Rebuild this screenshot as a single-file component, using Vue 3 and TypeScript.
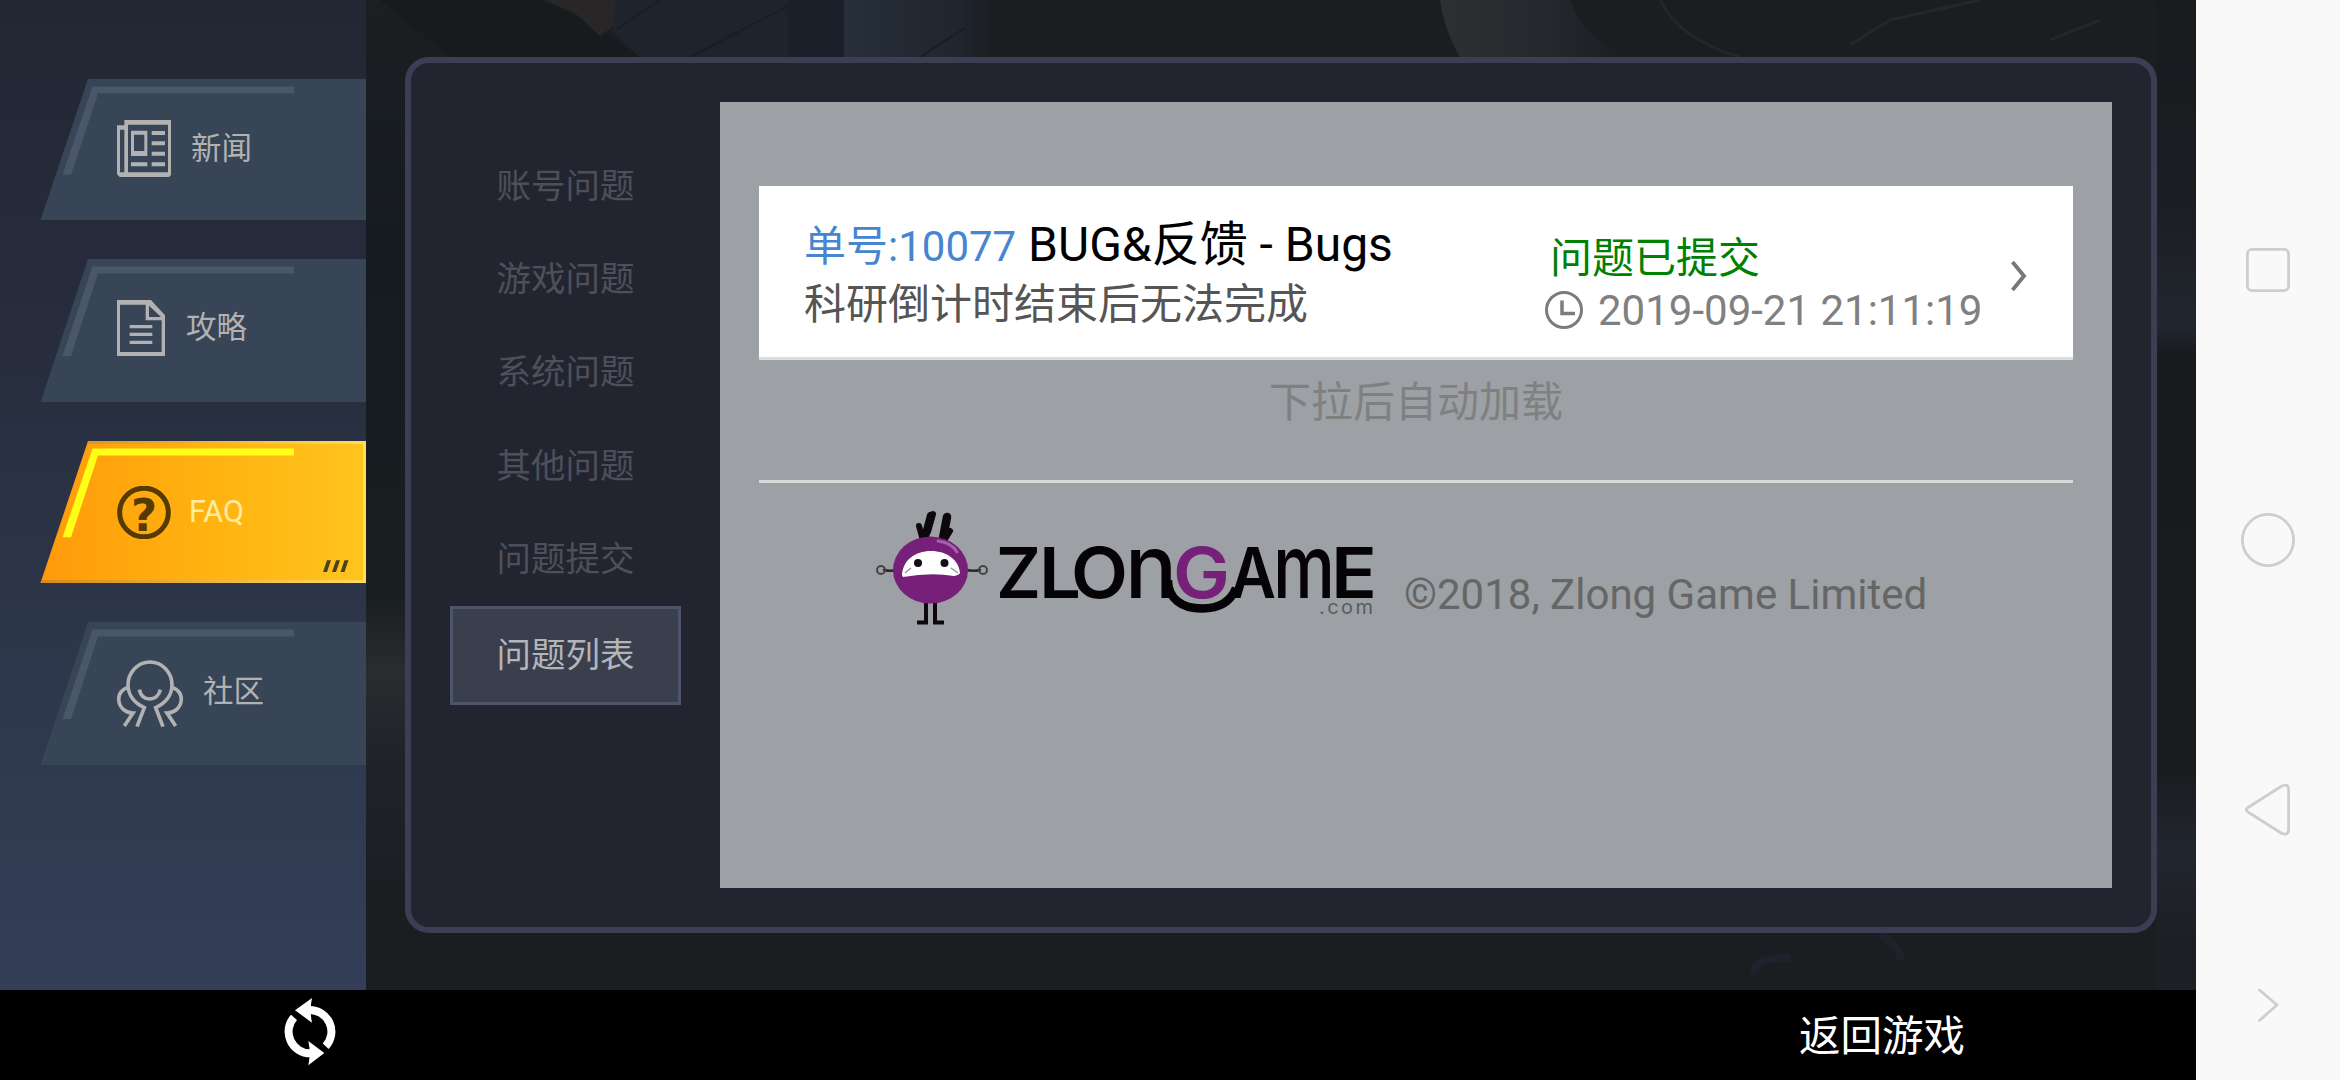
<script setup lang="ts">
interface Tab {
  id: string
  label: string
  active?: boolean
}

const tabs: Tab[] = [
  { id: 'news', label: '新闻' },
  { id: 'guide', label: '攻略' },
  { id: 'faq', label: 'FAQ', active: true },
  { id: 'community', label: '社区' },
]

const menu: string[] = ['账号问题', '游戏问题', '系统问题', '其他问题', '问题提交', '问题列表']
const current = '问题列表'
</script>

<template>
  <div class="screen">
    <div class="app">
      <div class="stage">
        <aside class="sidebar">
          <a v-for="tab in tabs" :key="tab.id" class="tab" :class="[tab.id, { active: tab.active }]">
            <svg class="plate" viewBox="0 0 326 143" preserveAspectRatio="none" width="326" height="143">
              <defs>
                <linearGradient id="gold" x1="0" x2="1" y1="0" y2="0">
                  <stop offset="0" stop-color="#ff9a0b" />
                  <stop offset="0.5" stop-color="#ffb210" />
                  <stop offset="1" stop-color="#ffc41e" />
                </linearGradient>
                <linearGradient id="rim" x1="0" x2="1" y1="0" y2="0">
                  <stop offset="0" stop-color="#d88a1a" />
                  <stop offset="1" stop-color="#ffdc58" />
                </linearGradient>
              </defs>
              <path class="shape" d="M48 0H326V143H0.5Z" />
              <path v-if="tab.active" d="M48 1.5H324.5V141.5H2" fill="none" stroke="url(#rim)" stroke-width="3" />
              <path class="accent" d="M52.5 7.500H254V14.500H58L31 97H22.500Z" />
              <path v-if="tab.active" d="M287 120h4l-4 12h-4zM296 120h4l-4 12h-4zM304.500 120h4l-4 12h-4z" fill="#4a431f" />
            </svg>
            <svg v-if="tab.id === 'news'" class="icon" viewBox="0 0 162 171" width="54" height="57">
              <path fill="#b2b2b2" d="M22 0H162V165L156 171H8L0 163V16H22ZM33 14V157H153V14ZM9 29V157H22V29Z" fill-rule="evenodd" />
              <path fill="#b2b2b2" fill-rule="evenodd" d="M42 32H91V108H42ZM51 44V93H82V44ZM104 33H144V45H104ZM104 64H144V76H104ZM104 95H144V107H104ZM104 127H144V139H104ZM42 127H91V139H42Z" />
            </svg>
            <svg v-else-if="tab.id === 'guide'" class="icon" viewBox="0 0 144 168" width="48" height="56">
              <path fill="#b2b2b2" fill-rule="evenodd" d="M0 0H102L144 46V168H0ZM9 14V156H134V61H86V14ZM96 17V51H132Z" />
              <path stroke="#b2b2b2" stroke-width="10" d="M38 80H106M38 103H106M38 127H106" />
            </svg>
            <svg v-else-if="tab.id === 'faq'" class="icon" viewBox="0 0 162 158" width="54" height="53">
              <circle cx="81" cy="79" r="73" fill="none" stroke="#553a04" stroke-width="15" />
              <text x="81" y="134" text-anchor="middle" class="mark">?</text>
            </svg>
            <svg v-else class="icon" viewBox="0 0 198 204" width="66" height="68">
              <g fill="none" stroke="#b2b2b2" stroke-width="11">
                <path d="M60 200L82 143C50 128 33 102 33 75A66 69 0 0 1 165 75C165 102 148 128 116 143L138 200" />
                <path d="M67 89C71 107 83 117 98 117S126 107 130 89" />
                <path d="M30 83C10 92 4 108 5.500 122C8 145 28 159 48 159L22 198M168 83C188 92 194 108 192.500 122C190 145 170 159 150 159L176 198" />
              </g>
            </svg>
            <span class="tab-label">{{ tab.label }}</span>
          </a>
        </aside>

        <main class="content">
          <svg class="scenery" viewBox="366 0 1830 990" width="1830" height="990" aria-hidden="true">
            <defs>
              <linearGradient id="side" x1="0" x2="0" y1="0" y2="1">
                <stop offset="0" stop-color="#1b1f21" />
                <stop offset="0.25" stop-color="#161b22" />
                <stop offset="0.6" stop-color="#191e20" />
                <stop offset="0.68" stop-color="#2a2c2e" />
                <stop offset="0.76" stop-color="#20232a" />
                <stop offset="0.9" stop-color="#1b1e21" />
              </linearGradient>
              <linearGradient id="right" x1="0" x2="0" y1="0" y2="1">
                <stop offset="0" stop-color="#181c1f" />
                <stop offset="0.2" stop-color="#1a1e22" />
                <stop offset="0.33" stop-color="#22262f" />
                <stop offset="0.36" stop-color="#171b1e" />
                <stop offset="0.78" stop-color="#191c1f" />
                <stop offset="0.86" stop-color="#22262f" />
                <stop offset="0.95" stop-color="#1c1f23" />
              </linearGradient>
              <linearGradient id="beam" x1="0" x2="1" y1="0" y2="0">
                <stop offset="0" stop-color="#2e2f32" />
                <stop offset="0.6" stop-color="#25282d" />
                <stop offset="1" stop-color="#1b1e21" />
              </linearGradient>
              <linearGradient id="steel" x1="0" x2="1" y1="0" y2="0">
                <stop offset="0" stop-color="#262f3a" />
                <stop offset="0.8" stop-color="#20252e" />
                <stop offset="1" stop-color="#1b1e21" />
              </linearGradient>
            </defs>
            <rect x="366" width="1830" height="990" fill="#1b1e21" />
            <rect x="366" width="39" height="990" fill="url(#side)" />
            <rect x="2156" width="40" height="990" fill="url(#right)" />
            <path fill="#171b1d" d="M380 0H540L585 20L640 57H450Z" />
            <path fill="#292627" d="M545 0H616V24L600 36L576 14Z" />
            <path fill="#1f232c" d="M616 0H844V57H640L612 32Z" />
            <path fill="#1a1f29" d="M788 0H844V57H788Z" />
            <path fill="url(#steel)" d="M844 0H990V57H844Z" />
            <path fill="none" stroke="#191d24" stroke-width="2" d="M616 30L660 0M690 57L790 5M920 57L965 28" />
            <path fill="url(#beam)" d="M1440 0H1570Q1580 30 1620 57H1460Q1444 30 1440 0Z" />
            <path fill="none" stroke="#22272b" stroke-width="3" d="M1850 45L1890 20L1980 0M2050 40L2100 20M1660 0Q1680 40 1740 57" />
            <path fill="none" stroke="#1e222b" stroke-width="8" d="M1790 958q-40 0-35 15M1880 935q20 10 20 25" />
          </svg>

          <section class="panel">
            <nav class="menu">
              <a v-for="item in menu" :key="item" :class="{ selected: item === current }">{{ item }}</a>
            </nav>

            <div class="board">
              <article class="ticket">
                <div class="ticket-main">
                  <div class="title"><span class="number">单号:10077</span> BUG&amp;反馈 - Bugs</div>
                  <div class="summary">科研倒计时结束后无法完成</div>
                </div>
                <div class="ticket-meta">
                  <div class="status">问题已提交</div>
                  <div class="date">
                    <svg viewBox="0 0 38 38" width="38" height="38">
                      <circle cx="19" cy="19" r="17.500" fill="none" stroke="#7c7c7c" stroke-width="3" />
                      <path d="M17 9.500V22.500H30" fill="none" stroke="#7c7c7c" stroke-width="3.500" />
                    </svg>
                    <span>2019-09-21 21:11:19</span>
                  </div>
                </div>
                <svg class="chevron" viewBox="0 0 18 32" width="18" height="32">
                  <path d="M2.500 2L14 16L2.500 30" fill="none" stroke="#777" stroke-width="3.800" />
                </svg>
              </article>
              <p class="hint">下拉后自动加载</p>
              <footer class="credits">
                <svg class="logo" viewBox="876 508 498 120" width="498" height="120">
                  <g fill="none" stroke="#0d080c" stroke-linecap="round">
                    <path d="M924 556V544L919 526M924 543L933 514" stroke-width="6" />
                    <path d="M927 531L931 516" stroke-width="8.500" />
                    <path d="M940 556L942 544L950 531" stroke-width="6" />
                    <path d="M943 538L947 517" stroke-width="8.500" />
                    <path d="M926 602V622.500H917M935 602V622.500H944" stroke-width="4" stroke-linecap="butt" />
                    <path d="M884 570Q892 572 902 569M963 569Q972 572 980 570" stroke-width="2.500" stroke="#2c2930" />
                    <circle cx="881" cy="570" r="4" stroke-width="2" stroke="#444" />
                    <circle cx="983" cy="570" r="4" stroke-width="2" stroke="#444" />
                  </g>
                  <ellipse cx="930.500" cy="570" rx="37.500" ry="33.500" fill="#76207a" />
                  <path d="M938 541Q952 543 957 552" stroke="#a562ab" stroke-width="3" fill="none" stroke-linecap="round" />
                  <path d="M902 575C903 560 915 551 931 551S959 560 960 573Q959 575 954 576Q931 572 903 577Z" fill="#fff" />
                  <circle cx="918" cy="563" r="4" fill="#141016" />
                  <circle cx="944.500" cy="563" r="4" fill="#141016" />
                  <path d="M905 573L911 568M958 573L951 568" stroke="#8f9a90" stroke-width="1.500" />
                  <path d="M1168 580C1168 599 1182 608.500 1202 608.500C1220 608.500 1231 601 1236 588" fill="none" stroke="#050305" stroke-width="8.500" />
                  <g class="wordmark">
                    <text x="996" y="598" textLength="45" lengthAdjust="spacingAndGlyphs">Z</text>
                    <text x="1039" y="598" textLength="42" lengthAdjust="spacingAndGlyphs">L</text>
                    <text x="1071" y="598" textLength="57" lengthAdjust="spacingAndGlyphs">O</text>
                    <text class="low" x="1125" y="598" textLength="52" lengthAdjust="spacingAndGlyphs">n</text>
                    <text class="violet" x="1173" y="598" textLength="57" lengthAdjust="spacingAndGlyphs">G</text>
                    <text x="1230" y="598" textLength="46" lengthAdjust="spacingAndGlyphs">A</text>
                    <text class="low" x="1273" y="598" textLength="62" lengthAdjust="spacingAndGlyphs">m</text>
                    <text x="1331" y="598" textLength="46" lengthAdjust="spacingAndGlyphs">E</text>
                  </g>
                  <text class="domain" x="1319" y="614" textLength="54">.com</text>
                </svg>
                <span class="copyright">©2018, Zlong Game Limited</span>
              </footer>
            </div>
          </section>
        </main>
      </div>

      <div class="toolbar">
        <svg class="refresh" viewBox="0 0 156 204" width="52" height="68">
          <g fill="none" stroke="#fff" stroke-width="24">
            <path d="M74 36A65 65 0 0 1 125 145" />
            <path d="M30 58A65 65 0 0 0 80 166" />
          </g>
          <path fill="#fff" d="M33 37L84 0Q76 37 84 74ZM121 165L73 129Q81 165 73 202Z" />
        </svg>
        <a class="back">返回游戏</a>
      </div>
    </div>

    <div class="navbar">
      <svg viewBox="0 0 144 1080" width="144" height="1080" fill="none" stroke="#cecece" stroke-width="2.800" stroke-linejoin="round" stroke-linecap="round">
        <rect x="51.400" y="249.400" width="41.200" height="41.200" rx="4.500" />
        <circle cx="72" cy="540" r="25.600" />
        <path d="M52 807.500L85 786.500Q92.600 782.500 92.600 790V829Q92.600 836.500 85 833L52 812Q48.500 809.700 52 807.500Z" />
        <path d="M63.500 990L81 1005L63.500 1020.500" />
      </svg>
    </div>
  </div>
</template>

<style>
html,
body {
  margin: 0;
  background: #000;
}
</style>

<style scoped>
.screen {
  display: flex;
  width: 2340px;
  height: 1080px;
  overflow: hidden;
  font-family: Roboto, 'Noto Sans CJK SC', sans-serif;
}
.app {
  display: flex;
  flex-direction: column;
  width: 2196px;
}
.stage {
  display: flex;
  height: 990px;
}
.sidebar {
  display: flex;
  flex-direction: column;
  gap: 39px;
  box-sizing: border-box;
  width: 366px;
  padding: 79px 0 0 40px;
  background: linear-gradient(#222734, #272d3d 35%, #2d374a 65%, #343e58);
}
.tab {
  position: relative;
  display: flex;
  align-items: flex-start;
  height: 143px;
  box-sizing: border-box;
  padding-left: 77px;
  color: #b2b2b2;
}
.tab.news {
  height: 141px;
}
.tab.faq {
  height: 142px;
}
.plate {
  position: absolute;
  left: 0;
  top: 0;
  height: 100%;
}
.shape {
  fill: #374557;
}
.accent {
  fill: #4a5767;
}
.active .shape {
  fill: url(#gold);
}
.active .accent {
  fill: #ffff18;
}
.icon {
  position: relative;
  display: block;
}
.tab-label {
  position: relative;
  font-size: 30.500px;
  line-height: 40px;
}
.news .icon { margin-top: 41px; }
.news .tab-label { margin: 50px 0 0 20px; }
.guide .icon { margin-top: 41px; }
.guide .tab-label { margin: 49px 0 0 21px; }
.faq .icon { margin-top: 45px; }
.faq .tab-label { margin: 51px 0 0 18px; color: #ffeca0; }
.community .icon { margin-top: 38px; }
.community .tab-label { margin: 50px 0 0 20px; }
.mark {
  font: bold 135px 'DejaVu Sans', sans-serif;
  fill: #553a04;
}
.content {
  position: relative;
  box-sizing: border-box;
  width: 1830px;
  padding: 57px 39px;
}
.scenery {
  position: absolute;
  left: 0;
  top: 0;
}
.panel {
  position: relative;
  display: flex;
  box-sizing: border-box;
  width: 1752px;
  height: 876px;
  padding: 39px;
  border: 6px solid #3c3f53;
  border-radius: 24px;
  background: #22252f;
}
.menu {
  width: 231px;
  margin-right: 39px;
  padding-top: 38px;
}
.menu a {
  display: block;
  height: 93.200px;
  line-height: 93.200px;
  text-align: center;
  font-size: 34.500px;
  color: #4d4f5a;
}
.menu .selected {
  box-sizing: border-box;
  height: 99px;
  border: 3px solid #4c556c;
  background: #3a3f4d;
  color: #b3b5ba;
}
.board {
  box-sizing: border-box;
  width: 1392px;
  padding: 84px 39px 0;
  background: #9da0a4;
}
.ticket {
  display: flex;
  box-sizing: border-box;
  height: 174px;
  padding-left: 45px;
  border-bottom: 3px solid #dcdedd;
  background: #fff;
  white-space: nowrap;
}
.ticket-main {
  width: 741px;
  padding-top: 29px;
}
.title {
  height: 60px;
  line-height: 60px;
  font-size: 48px;
  color: #000;
}
.number {
  font-size: 42px;
  color: #4686d0;
}
.summary {
  line-height: 60px;
  font-size: 42px;
  color: #555;
}
.ticket-meta {
  width: 465px;
  padding-top: 45px;
}
.status {
  height: 54px;
  line-height: 56px;
  padding-left: 5px;
  font-size: 42px;
  color: #008000;
}
.date {
  display: flex;
  align-items: center;
  gap: 15px;
  height: 50px;
  font-size: 42px;
  color: #808080;
}
.chevron {
  margin-top: 74px;
}
.hint {
  margin: 0;
  height: 120px;
  box-sizing: border-box;
  padding-top: 13px;
  line-height: 60px;
  text-align: center;
  font-size: 42px;
  color: #808080;
}
.credits {
  display: flex;
  border-top: 3px solid #d9dad9;
  padding-left: 117px;
}
.logo {
  margin-top: 25px;
}
.copyright {
  margin: 84px 0 0 30px;
  line-height: 56px;
  font-size: 42px;
  color: #666;
  white-space: nowrap;
}
.wordmark text {
  font: 600 70px Inter, sans-serif;
  fill: #050305;
}
.wordmark .violet {
  fill: #76207a;
}
.wordmark text.low {
  font-size: 88px;
  font-weight: 500;
}
.domain {
  font: 20px Inter, sans-serif;
  fill: #5b5c60;
}
.toolbar {
  display: flex;
  height: 90px;
  background: #000;
}
.refresh {
  margin: 8px 0 0 284px;
}
.back {
  margin: 17px 0 0 1463px;
  line-height: 60px;
  font-size: 41.500px;
  color: #fff;
}
.navbar {
  width: 144px;
  background: #f9f9f9;
}
</style>
